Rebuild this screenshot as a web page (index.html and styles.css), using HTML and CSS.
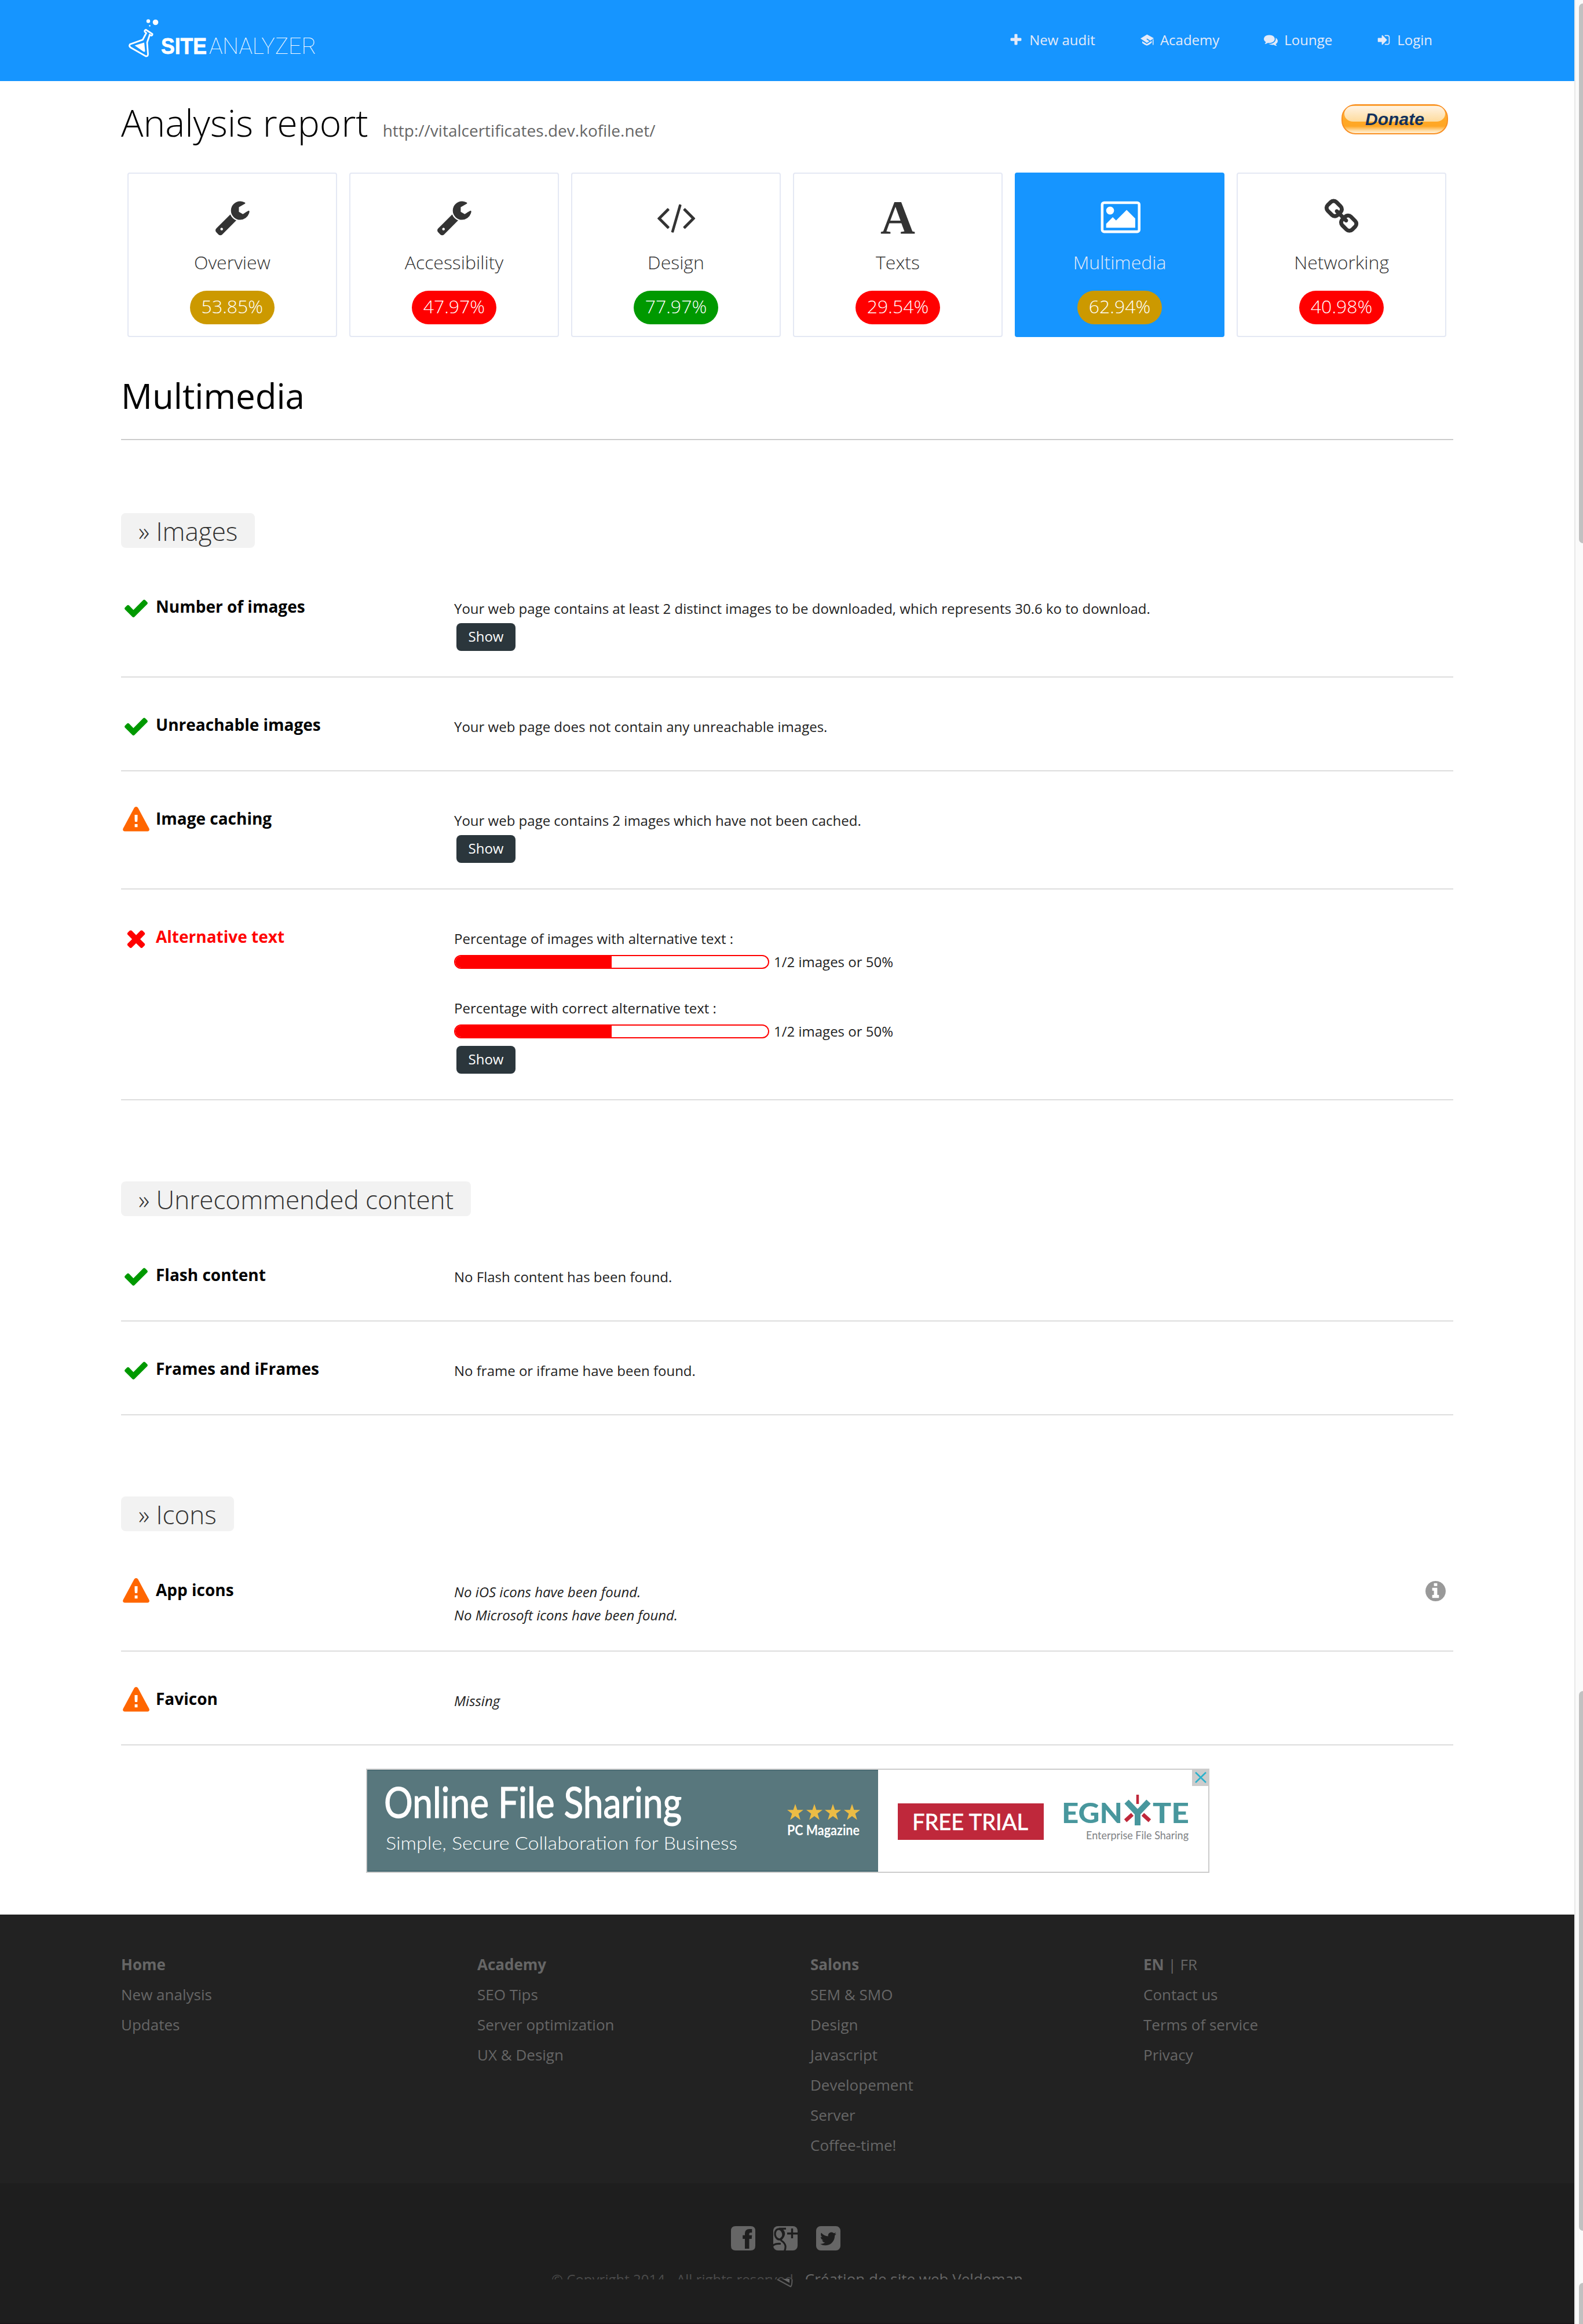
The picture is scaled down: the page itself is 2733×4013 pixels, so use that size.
FILE: index.html
```html
<!DOCTYPE html>
<html lang="en">
<head>
<meta charset="utf-8">
<title>Site Analyzer - Analysis report</title>
<link rel="stylesheet" href="styles.css">
</head>
<body>
<svg class="sprite" aria-hidden="true">
  <symbol id="i-wrench" viewBox="0 0 1792 1792"><path d="M448 1472q0-26-19-45t-45-19-45 19-19 45 19 45 45 19 45-19 19-45zm644-420l-682 682q-37 37-90 37-52 0-91-37l-106-108q-38-36-38-90 0-53 38-91l681-681q39 98 114.500 173.500t173.500 114.500zm634-435q0 39-23 106-47 134-164.500 217.500t-258.500 83.500q-185 0-316.500-131.500t-131.500-316.500 131.500-316.500 316.500-131.500q58 0 121.500 16.500t107.500 46.500q16 11 16 28t-16 28l-293 169v224l193 107q5-3 79-48.500t135.500-81 70.500-35.500q15 0 23.500 10t8.500 25z"/></symbol>
  <symbol id="i-code" viewBox="-32 0 2048 1792"><path d="M681 1399l-50 50q-10 10-23 10t-23-10l-466-466q-10-10-10-23t10-23l466-466q10-10 23-10t23 10l50 50q10 10 10 23t-10 23l-393 393 393 393q10 10 10 23t-10 23zm591-1067l-373 1291q-4 13-15.500 19.500t-23.500 2.500l-62-17q-13-4-19.500-15.500t-2.500-24.500l373-1291q4-13 15.500-19.500t23.500-2.500l62 17q13 4 19.500 15.500t2.500 24.500zm657 651l-466 466q-10 10-23 10t-23-10l-50-50q-10-10-10-23t10-23l393-393-393-393q-10-10-10-23t10-23l50-50q10-10 23-10t23 10l466 466q10 10 10 23t-10 23z"/></symbol>
  <symbol id="i-image" viewBox="-165 0 2048 1792"><path d="M576 576q0 80-56 136t-136 56-136-56-56-136 56-136 136-56 136 56 56 136zm1024 384v448h-1408v-192l320-320 160 160 512-512zm96-704h-1600q-13 0-22.500 9.500t-9.500 22.500v1216q0 13 9.500 22.500t22.500 9.500h1600q13 0 22.500-9.500t9.500-22.500v-1216q0-13-9.500-22.500t-22.500-9.500zm160 32v1216q0 66-47 113t-113 47h-1600q-66 0-113-47t-47-113v-1216q0-66 47-113t113-47h1600q66 0 113 47t47 113z"/></symbol>
  <symbol id="i-chain" viewBox="0 0 1792 1792"><path d="M1520 1216q0-40-28-68l-208-208q-28-28-68-28-42 0-72 32 3 3 19 18.500t21.500 21.500 15 19 13 25.500 3.500 27.500q0 40-28 68t-68 28q-15 0-27.500-3.500t-25.500-13-19-15-21.500-21.500-18.500-19q-33 31-33 73 0 40 28 68l206 207q27 27 68 27 40 0 68-26l147-146q28-28 28-67zm-703-705q0-40-28-68l-206-207q-28-28-68-28-39 0-68 27l-147 146q-28 28-28 67 0 40 28 68l208 208q27 27 68 27 42 0 72-31-3-3-19-18.500t-21.500-21.500-15-19-13-25.500-3.500-27.500q0-40 28-68t68-28q15 0 27.500 3.500t25.500 13 19 15 21.500 21.500 18.500 19q33-31 33-73zm895 705q0 120-85 203l-147 146q-83 83-203 83-121 0-204-85l-206-207q-83-83-83-203 0-123 88-209l-88-88q-86 88-208 88-120 0-204-84l-208-208q-84-84-84-204t85-203l147-146q83-83 203-83 121 0 204 85l206 207q83 83 83 203 0 123-88 209l88 88q86-88 208-88 120 0 204 84l208 208q84 84 84 204z"/></symbol>
  <symbol id="i-check" viewBox="0 0 1792 1792"><path d="M1671 566q0 40-28 68l-724 724-136 136q-28 28-68 28t-68-28l-136-136-362-362q-28-28-28-68t28-68l136-136q28-28 68-28t68 28l294 295 656-657q28-28 68-28t68 28l136 136q28 28 28 68z"/></symbol>
  <symbol id="i-times" viewBox="0 0 1792 1792"><path d="M1490 1322q0 40-28 68l-136 136q-28 28-68 28t-68-28l-294-294-294 294q-28 28-68 28t-68-28l-136-136q-28-28-28-68t28-68l294-294-294-294q-28-28-28-68t28-68l136-136q28-28 68-28t68 28l294 294 294-294q28-28 68-28t68 28l136 136q28 28 28 68t-28 68l-294 294 294 294q28 28 28 68z"/></symbol>
  <symbol id="i-warn" viewBox="0 0 46 46"><path fill-rule="evenodd" d="M19.800 1.800Q21 0 23 0t3.200 1.800L45.400 37.500Q46.400 39.800 45.300 41.300T42.200 42.600H3.800Q1.700 42.600.7 41.300T.6 37.500ZM20.500 14v7.500l.5 4.500h4l.5-4.500V14ZM20.600 30v5.300h4.900V30Z"/></symbol>
  <symbol id="i-plus" viewBox="0 0 1792 1792"><path d="M1600 736v192q0 40-28 68t-68 28h-416v416q0 40-28 68t-68 28h-192q-40 0-68-28t-28-68v-416h-416q-40 0-68-28t-28-68v-192q0-40 28-68t68-28h416v-416q0-40 28-68t68-28h192q40 0 68 28t28 68v416h416q40 0 68 28t28 68z"/></symbol>
  <symbol id="i-cap" viewBox="0 0 24 24"><path d="M1 9.500 12.300 2.500 24 9 18 13.200 12.500 9.600 11.300 10.800 16.400 14.200 12 17ZM4 14.200 12 19 20.500 13.500V16.800Q16 21 12 21.800 8 20.500 4 17.200ZM22 11.500 23.500 10.500V20.500H22Z"/></symbol>
  <symbol id="i-comments" viewBox="0 0 1792 1792"><path d="M1408 768q0 139-94 257t-256.500 186.500-353.500 68.500q-86 0-176-16-124 88-278 128-36 9-86 16h-3q-11 0-20.500-8t-11.500-21q-1-3-1-6.500t.5-6.500 2-6l2.500-5 3.500-5.500 4-5 4.500-5 4-4.500q5-6 23-25t26-29.500 22.500-29 25-38.500 20.500-44q-124-72-195-177t-71-224q0-139 94-257t256.500-186.500 353.500-68.500 353.500 68.500 256.500 186.500 94 257zm384 256q0 120-71 224.500t-195 176.500q10 24 20.500 44t25 38.500 22.500 29 26 29.500 23 25q1 1 4 4.500t4.500 5 4 5 3.500 5.500l2.500 5 2 6 .5 6.500-1 6.500q-3 14-13 22t-22 7q-50-7-86-16-154-40-278-128-90 16-176 16-271 0-472-132 58 4 88 4 161 0 309-45t264-129q125-92 192-212t67-254q0-77-23-152 129 71 204 178t75 230z"/></symbol>
  <symbol id="i-signin" viewBox="0 0 1792 1792"><path d="M1312 896q0 26-19 45l-544 544q-19 19-45 19t-45-19-19-45v-288h-448q-26 0-45-19t-19-45v-384q0-26 19-45t45-19h448v-288q0-26 19-45t45-19 45 19l544 544q19 19 19 45zm352-352v704q0 119-84.500 203.500t-203.500 84.500h-320q-13 0-22.500-9.500t-9.500-22.500q0-4-1-20t-.5-26.500 3-23.500 10-19.500 20.500-6.500h320q66 0 113-47t47-113v-704q0-66-47-113t-113-47h-312l-11.500-1-11.500-3-8-5.500-7-9-2-13.500q0-4-1-20t-.5-26.500 3-23.500 10-19.500 20.500-6.500h320q119 0 203.500 84.500t84.500 203.500z"/></symbol>
  <symbol id="i-info" viewBox="128 128 1536 1536"><path d="M1152 1376v-160q0-14-9-23t-23-9h-96v-512q0-14-9-23t-23-9h-320q-14 0-23 9t-9 23v160q0 14 9 23t23 9h96v320h-96q-14 0-23 9t-9 23v160q0 14 9 23t23 9h448q14 0 23-9t9-23zm-128-896v-160q0-14-9-23t-23-9h-192q-14 0-23 9t-9 23v160q0 14 9 23t23 9h192q14 0 23-9t9-23zm640 416q0 209-103 385.500t-279.500 279.500-385.500 103-385.500-103-279.500-279.500-103-385.500 103-385.500 279.500-279.500 385.500-103 385.500 103 279.500 279.500 103 385.500z"/></symbol>
  <symbol id="i-facebook" viewBox="0 0 42 42"><path fill-rule="evenodd" d="M8 0H34Q42 0 42 8V34Q42 42 34 42H8Q0 42 0 34V8Q0 0 8 0ZM24 39h7.500V22h4.200l.6-6.300H31.500v-2.500q0-2 2-2h2.800V5H32q-8 0-8 7.500v3.200h-3.800V22H24Z"/></symbol>
  <symbol id="i-gplus" viewBox="0 0 42 42"><rect width="42" height="42" rx="8"/><g fill="none" stroke="#1e1e1e"><ellipse cx="10" cy="14" rx="7" ry="9" stroke-width="3.400" transform="rotate(-10 10 14)"/><path d="M10 4.300H22M15 6Q19 10 18.500 14 18 18 15 20 12 22.500 14 25 20 29 21 34 21.500 38 19.500 43M-1 34Q3 29.500 13 30.500" stroke-width="3.200"/><path d="M32.500 4V21M24 12.800H42" stroke-width="3.400"/></g></symbol>
  <symbol id="i-twitter" viewBox="128 128 1536 1536"><path d="M1408 610q-56 25-121 34 68-40 93-117-65 38-134 51-61-66-153-66-87 0-148.500 61.500t-61.500 148.500q0 29 5 48-129-7-242-65t-192-155q-29 50-29 106 0 114 91 175-47-1-100-26v2q0 75 50 133.500t123 72.500q-29 8-51 8-13 0-39-4 21 63 74.500 104t121.500 42q-116 90-261 90-26 0-50-3 148 94 322 94 112 0 210-35.500t168-95 120.500-137 75-162 24.500-168.500q0-18-1-27 63-45 105-109zm256-194v960q0 119-84.500 203.500t-203.500 84.500h-960q-119 0-203.500-84.500t-84.500-203.500v-960q0-119 84.500-203.500t203.500-84.500h960q119 0 203.500 84.500t84.500 203.500z"/></symbol>
  <symbol id="i-star" viewBox="0 0 26 26"><path d="M13 0 16.200 9.500H26L18.200 15.500 21.200 25.500 13 19.400 4.800 25.500 7.800 15.500 0 9.500H9.800Z"/></symbol>
</svg>

<div class="page">
  <header class="topbar">
    <svg class="logo" viewBox="0 0 330 74" role="img" aria-label="Site Analyzer">
      <circle cx="48.500" cy="10.500" r="4.800"/><circle cx="36" cy="8.500" r="3.200"/><circle cx="38.500" cy="16.500" r="1.300"/>
      <path class="logo-flask" d="M32 23.500 43 30.500Q43.500 33 41 33.500L38.500 32 34 45.500 35.500 65.500Q35.500 69.500 31.500 69L5.500 54Q2 51.500 4.500 48.500L26.500 40.500 32.500 29 30 27Q29 24 32 23.500Z"/>
      <path d="M12.500 50.500 29 45.500 30.500 60.500Q29.500 62 27.500 61Z"/>
      <text class="logo-site" x="58" y="64.700" textLength="79" lengthAdjust="spacingAndGlyphs">SITE</text>
      <text class="logo-analyzer" x="141" y="64.700" textLength="185" lengthAdjust="spacingAndGlyphs">ANALYZER</text>
    </svg>
    <nav class="nav">
      <a class="nav-item"><svg class="nav-icon"><use href="#i-plus"/></svg>New audit</a>
      <a class="nav-item"><svg class="nav-icon"><use href="#i-cap"/></svg>Academy</a>
      <a class="nav-item"><svg class="nav-icon"><use href="#i-comments"/></svg>Lounge</a>
      <a class="nav-item"><svg class="nav-icon"><use href="#i-signin"/></svg>Login</a>
    </nav>
  </header>

  <main class="container">
    <div class="title-row">
      <h1 class="title">Analysis report</h1>
      <span class="url">http://vitalcertificates.dev.kofile.net/</span>
      <svg class="donate" viewBox="0 0 184 52">
        <defs>
          <linearGradient id="d-base" x1="0" y1="0" x2="0" y2="1"><stop offset="0" stop-color="#ffb64d"/><stop offset=".55" stop-color="#ffa826"/><stop offset=".74" stop-color="#ffa726"/><stop offset=".9" stop-color="#ffe0ad"/><stop offset="1" stop-color="#fff3dc"/></linearGradient>
          <linearGradient id="d-shine" x1="0" y1="0" x2="0" y2="1"><stop offset="0" stop-color="#fff3e3"/><stop offset="1" stop-color="#fedb9d"/></linearGradient>
        </defs>
        <rect x="1" y="1" width="182" height="50" rx="23" fill="url(#d-base)" stroke="#f98f22" stroke-width="2"/>
        <rect x="5" y="3" width="174" height="27" rx="15" fill="url(#d-shine)"/>
        <text class="donate-text" x="41" y="36" textLength="102" lengthAdjust="spacingAndGlyphs">Donate</text>
      </svg>
    </div>

    <div class="cards">
      <a class="card"><svg class="card-icon"><use href="#i-wrench"/></svg><span class="card-label">Overview</span><span class="score score-mid">53.85%</span></a>
      <a class="card"><svg class="card-icon"><use href="#i-wrench"/></svg><span class="card-label">Accessibility</span><span class="score score-bad">47.97%</span></a>
      <a class="card"><svg class="card-icon card-icon-wide"><use href="#i-code"/></svg><span class="card-label">Design</span><span class="score score-good">77.97%</span></a>
      <a class="card"><span class="card-icon card-letter">A</span><span class="card-label">Texts</span><span class="score score-bad">29.54%</span></a>
      <a class="card card-active"><svg class="card-icon card-icon-wide"><use href="#i-image"/></svg><span class="card-label">Multimedia</span><span class="score score-mid">62.94%</span></a>
      <a class="card"><svg class="card-icon"><use href="#i-chain"/></svg><span class="card-label">Networking</span><span class="score score-bad">40.98%</span></a>
    </div>

    <h2 class="heading">Multimedia</h2>

    <section class="section">
      <h3 class="section-label">» Images</h3>
      <div class="row">
        <div class="row-name"><svg class="status ok"><use href="#i-check"/></svg>Number of images</div>
        <div class="row-body"><p>Your web page contains at least 2 distinct images to be downloaded, which represents 30.6 ko to download.</p><a class="show">Show</a></div>
      </div>
      <div class="row">
        <div class="row-name"><svg class="status ok"><use href="#i-check"/></svg>Unreachable images</div>
        <div class="row-body"><p>Your web page does not contain any unreachable images.</p></div>
      </div>
      <div class="row">
        <div class="row-name"><svg class="status warn"><use href="#i-warn"/></svg>Image caching</div>
        <div class="row-body"><p>Your web page contains 2 images which have not been cached.</p><a class="show">Show</a></div>
      </div>
      <div class="row">
        <div class="row-name bad"><svg class="status"><use href="#i-times"/></svg>Alternative text</div>
        <div class="row-body">
          <p>Percentage of images with alternative text :</p>
          <div class="meter"><span class="track"><span class="fill" style="width:50%"></span></span>1/2 images or 50%</div>
          <p class="gap-top">Percentage with correct alternative text :</p>
          <div class="meter"><span class="track"><span class="fill" style="width:50%"></span></span>1/2 images or 50%</div>
          <a class="show">Show</a>
        </div>
      </div>
    </section>

    <section class="section section-next">
      <h3 class="section-label">» Unrecommended content</h3>
      <div class="row">
        <div class="row-name"><svg class="status ok"><use href="#i-check"/></svg>Flash content</div>
        <div class="row-body"><p>No Flash content has been found.</p></div>
      </div>
      <div class="row">
        <div class="row-name"><svg class="status ok"><use href="#i-check"/></svg>Frames and iFrames</div>
        <div class="row-body"><p>No frame or iframe have been found.</p></div>
      </div>
    </section>

    <section class="section section-next">
      <h3 class="section-label">» Icons</h3>
      <div class="row">
        <div class="row-name"><svg class="status warn"><use href="#i-warn"/></svg>App icons</div>
        <div class="row-body italic"><p>No iOS icons have been found.</p><p>No Microsoft icons have been found.</p></div>
        <svg class="info"><use href="#i-info"/></svg>
      </div>
      <div class="row">
        <div class="row-name"><svg class="status warn"><use href="#i-warn"/></svg>Favicon</div>
        <div class="row-body italic"><p>Missing</p></div>
      </div>
    </section>

    <svg class="ad" viewBox="0 0 1456 180">
      <rect x="1" y="1" width="1454" height="178" fill="#fff" stroke="#ccc" stroke-width="2"/>
      <rect x="2" y="2" width="882" height="176" fill="#486b73"/>
      <rect x="3" y="4" width="881" height="172" fill="#58777d"/>
      <text class="ad-title" x="31" y="85" textLength="514" lengthAdjust="spacingAndGlyphs">Online File Sharing</text>
      <text class="ad-sub" x="34" y="140" textLength="607" lengthAdjust="spacingAndGlyphs">Simple, Secure Collaboration for Business</text>
      <g fill="#ecbc45"><use href="#i-star" x="727" y="61" width="28" height="28"/><use href="#i-star" x="760" y="61" width="28" height="28"/><use href="#i-star" x="792" y="61" width="28" height="28"/><use href="#i-star" x="825" y="61" width="28" height="28"/></g>
      <text class="ad-mag" x="727" y="115" textLength="125" lengthAdjust="spacingAndGlyphs">PC Magazine</text>
      <rect x="918" y="60" width="252" height="63" fill="#bf283b"/>
      <text class="ad-cta" x="943" y="106" textLength="200" lengthAdjust="spacingAndGlyphs">FREE TRIAL</text>
      <text class="ad-brand" x="1201" y="94" textLength="105" lengthAdjust="spacingAndGlyphs">EGN</text>
      <text class="ad-brand" x="1358" y="94" textLength="63" lengthAdjust="spacingAndGlyphs">TE</text>
      <g fill="none"><path stroke="#48979d" stroke-width="10" d="M1313 57 1332 77 1351 57M1332 75V98"/><path stroke="#bf283b" stroke-width="4.500" d="M1332 45V61"/><path stroke="#bf283b" stroke-width="6.500" d="M1311 90 1323 79M1353 90 1341 79"/></g>
      <text class="ad-tag" x="1243" y="122" textLength="177" lengthAdjust="spacingAndGlyphs">Enterprise File Sharing</text>
      <rect x="1426" y="0" width="30" height="30" fill="#ccc"/>
      <path d="M1432 6.500 1450 24M1450 6.500 1432 24" stroke="#2bb1cc" stroke-width="2.600"/>
    </svg>
  </main>

  <footer class="footer">
    <div class="links">
      <ul class="col"><li class="strong">Home</li><li>New analysis</li><li>Updates</li></ul>
      <ul class="col"><li class="strong">Academy</li><li>SEO Tips</li><li>Server optimization</li><li>UX &amp; Design</li></ul>
      <ul class="col"><li class="strong">Salons</li><li>SEM &amp; SMO</li><li>Design</li><li>Javascript</li><li>Developement</li><li>Server</li><li>Coffee-time!</li></ul>
      <ul class="col"><li><b>EN</b> | FR</li><li>Contact us</li><li>Terms of service</li><li>Privacy</li></ul>
    </div>
    <div class="bottom">
      <div class="social"><svg><use href="#i-facebook"/></svg><svg><use href="#i-gplus"/></svg><svg><use href="#i-twitter"/></svg></div>
      <div class="copy-wrap">
        <p class="copy">© Copyright 2014 - All rights reserved - <span class="credit">Création de site web Veldeman</span></p>
        <svg class="mini-flask" viewBox="0 0 28 15"><path d="M1 1 24 13.500Q26.500 12 26.500 1" fill="none" stroke="#5c5c5c" stroke-width="2"/><path d="M10 0H22V7Z" fill="#666"/></svg>
      </div>
    </div>
  </footer>
</div>
<div class="scrollbar"><i class="thumb"></i><i class="thumb thumb-second"></i><i class="thumb thumb-last"></i></div>
</body>
</html>
```
FILE: styles.css
```css
* { box-sizing: border-box; margin: 0; padding: 0; }
body {
  display: flex; width: 2733px; height: 4013px; overflow: hidden;
  background: #fff; color: #222; font: 24px/40px "Open Sans", sans-serif;
}
svg { display: block; flex: none; fill: currentColor; }
.sprite { position: absolute; width: 0; height: 0; }
.page { width: 2718px; flex: none; display: flex; flex-direction: column; }

.topbar {
  height: 140px; background: #1695ff; color: #e4eaf8;
  display: flex; justify-content: space-between; padding: 28px 245px 0 220px;
}
.logo { width: 330px; height: 74px; fill: #fff; }
.logo-flask { fill: none; stroke: #fff; stroke-width: 2.8; }
.logo-site { font: 700 38.5px "Liberation Sans", sans-serif; stroke: #fff; stroke-width: .8; }
.logo-analyzer { font: 100 38.5px Roboto, sans-serif; }
.nav { display: flex; gap: 77px; padding-top: 25px; height: 57px; }
.nav-item { display: flex; align-items: center; gap: 11px; line-height: 32px; }
.nav-icon { width: 24px; height: 24px; }

.container { width: 2300px; margin-left: 209px; }
.title-row { display: flex; align-items: baseline; height: 158px; padding-top: 28px; }
.title { font-size: 64px; line-height: 88px; font-weight: 300; color: #000; }
.url { font-size: 28px; margin-left: 25px; color: #666; }
.donate { width: 184px; height: 52px; align-self: flex-start; margin: 12px 9px 0 auto; }
.donate-text { font: italic 700 30px "Liberation Sans", sans-serif; fill: #12305c; }

.cards { display: grid; grid-template-columns: repeat(6, 1fr); column-gap: 21.3px; padding: 0 12px 0 11px; }
.card {
  height: 284px; border: 2px solid #e4e8f4; border-radius: 4px; padding-top: 43px; color: #333;
  display: flex; flex-direction: column; align-items: center; font-size: 32px; font-weight: 300;
}
.card-active { background: #1695ff; border-color: #1695ff; color: #fff; }
.card-icon { width: 64px; height: 64px; }
.card-icon-wide { width: 73px; }
.card-letter { font: 700 83px/64px "Liberation Serif", serif; text-align: center; }
.card-label { line-height: 44px; margin-top: 24px; }
.card-active .card-label { color: #e4eaf8; }
.score {
  width: 146px; height: 58px; margin-top: 27px; border-radius: 29px;
  line-height: 54px; text-align: center; color: #fff;
}
.score-mid { background: #c90; }
.score-bad { background: #f00; }
.score-good { background: #090; }

.heading {
  font-size: 60px; line-height: 80px; font-weight: 400; color: #000;
  margin-top: 61px; padding-bottom: 35px; border-bottom: 2px solid #ccc;
}
.section { padding-top: 126px; }
.section-next { padding-top: 140px; }
.section-label {
  width: fit-content; height: 60px; margin-bottom: 20px; padding: 0 30px;
  border-radius: 8px; background: #f2f2f2; color: #333;
  font-size: 44px; line-height: 62px; font-weight: 300;
}
.row { display: flex; min-height: 162px; padding-bottom: 41px; border-bottom: 2px solid #ddd; }
.row-name {
  width: 575px; padding: 61px 0 0 3px; display: flex; align-items: flex-start; gap: 11px;
  font-size: 28px; font-weight: 700; color: #000;
}
.row-body { flex: 1; padding-top: 65px; }
.row .bad { color: #f00; }
.status { width: 46px; height: 46px; }
.ok { color: #090; }
.warn { color: #f60; }
.italic { font-style: italic; }
.show {
  display: block; width: 102px; height: 48px; margin: 5px 0 3px 4px; border-radius: 8px;
  background: #2b363c; color: #fff; text-align: center; line-height: 46px;
}
.meter { display: flex; align-items: center; gap: 8px; }
.track { width: 544px; height: 24px; border: 2px solid #f00; border-radius: 12px; overflow: hidden; }
.fill { display: block; height: 100%; background: #f00; }
.gap-top { margin-top: 40px; }
.info { width: 35px; height: 35px; margin: 66px 13px 0 0; color: #999; }
.ad { width: 1456px; height: 180px; margin: 40px 0 72px 423px; }
.ad-title { font: 400 74px Lato, sans-serif; fill: #fff; stroke: #fff; stroke-width: 1.2; }
.ad-sub { font: 300 32px Lato, sans-serif; fill: #fff; }
.ad-mag { font: 700 25px Lato, sans-serif; fill: #fff; }
.ad-cta { font: 400 38px Lato, sans-serif; fill: #fff; stroke: #fff; stroke-width: .6; }
.ad-brand { font: 900 47px Lato, sans-serif; fill: #48979d; }
.ad-tag { font: 400 20px Lato, sans-serif; fill: #808285; }

.footer { flex: 1; background: #222; color: #666; font-size: 26px; line-height: 52px; display: flex; flex-direction: column; }
.links { display: grid; grid-template-columns: 615px 575px 575px 535px; height: 464px; padding: 60px 0 0 209px; }
.col { list-style: none; }
.strong { font-weight: 700; }
.bottom { flex: 1; background: #1e1e1e; border-bottom: 2px solid #1a1619; padding-top: 74px; }
.social { display: flex; gap: 31.500px; padding-left: 1261.500px; }
.social svg { width: 42px; height: 42px; }
.copy-wrap { position: relative; padding-top: 32px; }
.copy { height: 18px; overflow: hidden; text-align: center; white-space: nowrap; font-size: 24px; line-height: 34px; color: #4b4b4b; }
.credit { font-size: 26px; color: #666; }
.mini-flask { position: absolute; left: 1341px; top: 49px; width: 28px; height: 15px; }

.scrollbar { position: relative; flex: 1; background: #fafafa; border-left: 2px solid #e8e8e8; overflow: hidden; }
.thumb { position: absolute; left: 6px; top: 6px; width: 14px; height: 932px; border-radius: 7px; background: #c1c1c1; }
.thumb-second { top: 2920px; }
.thumb-last { top: 3942px; height: 100px; }
```
